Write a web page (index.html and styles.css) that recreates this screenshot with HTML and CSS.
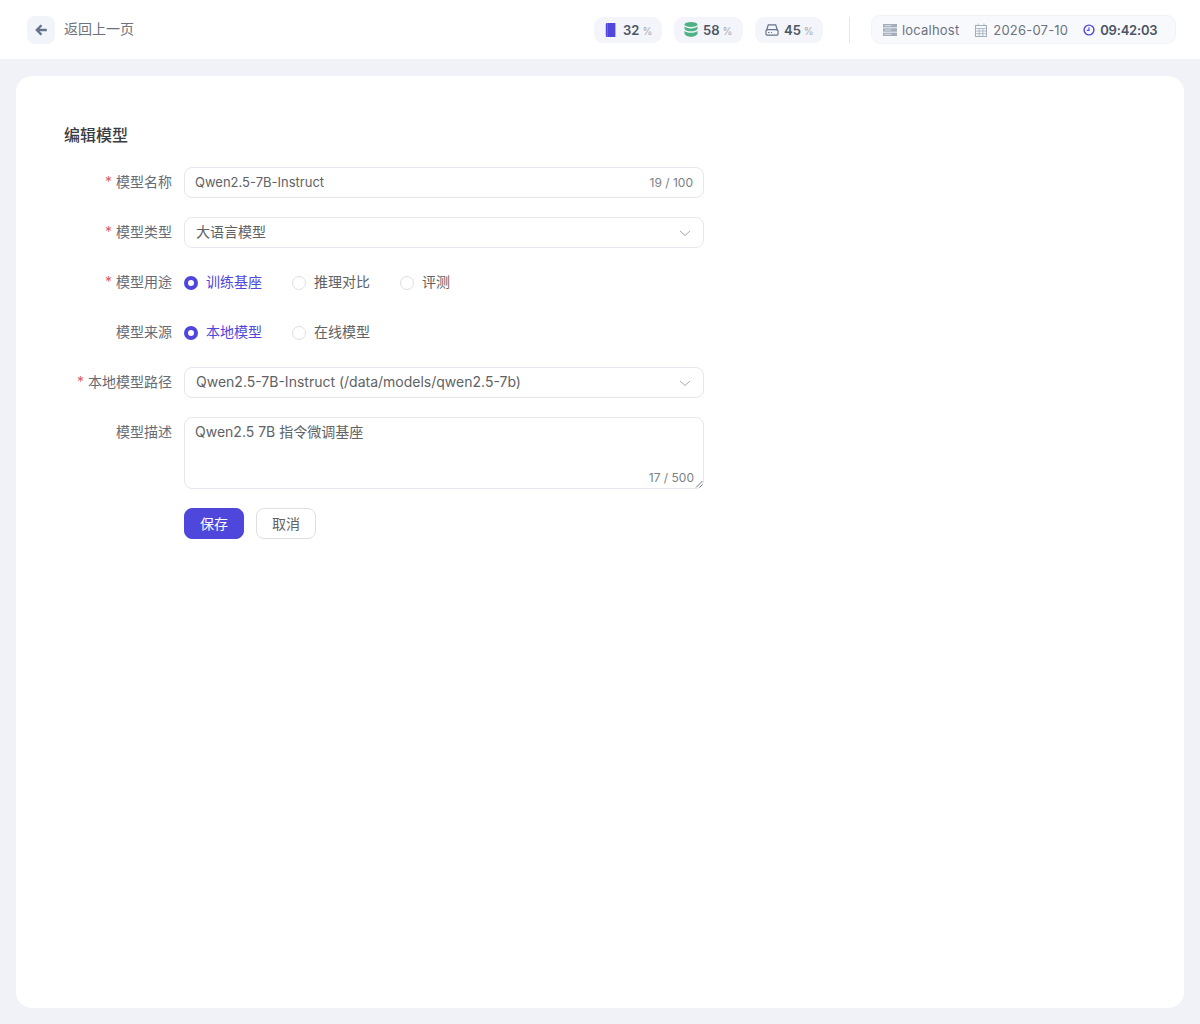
FILE: index.html
```html
<!DOCTYPE html>
<html lang="zh-CN">
<head>
<meta charset="utf-8">
<title>编辑模型</title>
<link rel="stylesheet" href="styles.css">
</head>
<body>
<header class="topbar">
  <div class="back">
    <span class="back-btn"><svg width="12" height="12" viewBox="0 0 12 12"><path d="M5.600.4.200 6l5.400 5.600 1.700-1.700L4.600 7.200h7.200V4.800H4.600l2.700-2.700z" fill="#64748b"/></svg></span>
    <span class="back-text">返回上一页</span>
  </div>
  <div class="status">
    <div class="stat">
      <svg width="14" height="14" viewBox="0 0 14 14"><path d="M3 0h8.400v14H3a1.200 1.200 0 0 1-1.200-1.200V1.200A1.200 1.200 0 0 1 3 0z" fill="#4f47dc"/><path d="M3.500 0v14" stroke="#7a73ee" stroke-width=".7"/></svg>
      <span class="num">32</span><span class="pct">%</span>
    </div>
    <div class="stat">
      <svg width="14" height="15" viewBox="0 0 14 15" fill="#4fb286"><ellipse cx="7" cy="2.600" rx="6.500" ry="2.500"/><path d="M.5 4.300C1.500 5.700 4 6.400 7 6.400s5.500-.7 6.500-2.100v2.600C12.800 8.500 10 9.300 7 9.300S1.200 8.500.5 6.900z"/><path d="M.5 8.700c1 1.400 3.500 2.100 6.500 2.100s5.500-.7 6.500-2.100v3.400c-.7 1.600-3.500 2.800-6.500 2.800s-5.800-1.200-6.500-2.800z"/></svg>
      <span class="num">58</span><span class="pct">%</span>
    </div>
    <div class="stat">
      <svg width="14" height="12" viewBox="0 0 14 12" fill="none" stroke="#64748b" stroke-width="1.200"><path d="M1.500 6.500 3.300.9h7.400l1.800 5.600"/><rect x="1" y="5.700" width="12" height="5.500" rx="1.300"/><path d="M3 8.500h1.500M6 8.500h1"/></svg>
      <span class="num">45</span><span class="pct">%</span>
    </div>
  </div>
  <div class="divider"></div>
  <div class="sysinfo">
    <span class="info">
      <svg width="14" height="12" viewBox="0 0 14 12" fill="#a3adbc"><rect x="0" y="0" width="14" height="3.400"/><rect x="0" y="4.300" width="14" height="3.400"/><rect x="0" y="8.600" width="14" height="3.400"/><path d="M1.500 1.700h7M1.500 6h7M1.500 10.300h7" stroke="#e8ebf0" stroke-width=".8"/></svg>
      <span>localhost</span>
    </span>
    <span class="info">
      <svg width="12" height="14" viewBox="0 0 12 14" fill="none" stroke="#a3adbc"><rect x=".5" y="2.500" width="11" height="11"/><path d="M.5 5.500h11M3 .5v2.500M9 .5v2.500M4.200 5.500v8M7.800 5.500v8M.5 8h11M.5 10.700h11" stroke-width=".8"/></svg>
      <span>2026-07-10</span>
    </span>
    <span class="info time">
      <svg width="12" height="12" viewBox="0 0 12 12" fill="none" stroke="#4f47dc" stroke-width="1.400"><circle cx="6" cy="6" r="4.900"/><path d="M6 3.200V6.400H3.800" stroke-width="1.100"/></svg>
      <span>09:42:03</span>
    </span>
  </div>
</header>

<main class="card">
  <h1 class="title">编辑模型</h1>
  <form class="form">
    <div class="row">
      <div class="label"><i>*</i>模型名称</div>
      <div class="field input"><span class="value small">Qwen2.5-7B-Instruct</span><span class="count">19 / 100</span></div>
    </div>
    <div class="row">
      <div class="label"><i>*</i>模型类型</div>
      <div class="field select"><span class="value">大语言模型</span>
        <svg class="chev" width="12" height="12" viewBox="0 0 12 12" fill="none" stroke="#a3a9b3"><path d="M1 4l5 4.500L11 4"/></svg>
      </div>
    </div>
    <div class="row">
      <div class="label"><i>*</i>模型用途</div>
      <div class="radios">
        <span class="radio on"><b></b><span>训练基座</span></span>
        <span class="radio"><b></b><span>推理对比</span></span>
        <span class="radio"><b></b><span>评测</span></span>
      </div>
    </div>
    <div class="row">
      <div class="label">模型来源</div>
      <div class="radios">
        <span class="radio on"><b></b><span>本地模型</span></span>
        <span class="radio"><b></b><span>在线模型</span></span>
      </div>
    </div>
    <div class="row">
      <div class="label"><i>*</i>本地模型路径</div>
      <div class="field select"><span class="value">Qwen2.5-7B-Instruct (/data/models/qwen2.5-7b)</span>
        <svg class="chev" width="12" height="12" viewBox="0 0 12 12" fill="none" stroke="#a3a9b3"><path d="M1 4l5 4.500L11 4"/></svg>
      </div>
    </div>
    <div class="row">
      <div class="label">模型描述</div>
      <div class="field area"><span class="value">Qwen2.5 7B 指令微调基座</span><span class="count">17 / 500</span>
        <svg class="grip" width="8" height="8" viewBox="0 0 8 8" fill="none" stroke="#6b7280"><path d="M1 7.500 7.500 1M4.500 7.500 7.500 4.500"/></svg>
      </div>
    </div>
    <div class="actions">
      <span class="btn primary">保存</span>
      <span class="btn">取消</span>
    </div>
  </form>
</main>
</body>
</html>
```
FILE: styles.css
```css
* { box-sizing: border-box; }
html, body { height: 100%; }
body {
  margin: 0;
  background: #f0f2f7;
  font-family: Inter, "Noto Sans CJK SC", sans-serif;
  color: #4b5563;
  font-size: 14px;
  display: flex;
  flex-direction: column;
  height: 1024px;
  overflow: hidden;
}
svg { flex: none; }
.topbar {
  height: 59px;
  flex: none;
  background: #fff;
  display: flex;
  align-items: center;
  padding: 0 24px 0 27px;
}
.back { display: flex; align-items: center; gap: 9px; margin-right: auto; }
.back-btn {
  width: 28px; height: 28px;
  border-radius: 8px;
  background: #f1f4f9;
  display: flex; align-items: center; justify-content: center;
}
.back-text { color: #6b7280; font-size: 14px; line-height: 20px; padding-bottom: 1px; }
.status { display: flex; gap: 12px; }
.stat {
  height: 26px;
  padding: 0 0 0 10px;
  background: #f3f5fa;
  border-radius: 9px;
  display: flex; align-items: center;
  gap: 5px;
  width: 68px;
}
.stat:nth-child(2) { width: 69px; }
.num { font-size: 13px; font-weight: 600; color: #4b5563; }
.pct { font-size: 10px; color: #a3a9b3; margin-left: -2px; padding-top: 2px; }
.divider { width: 1px; height: 26px; background: #e5e7eb; margin: 0 20px 0 26px; }
.sysinfo {
  width: 305px;
  margin-left: 1px;
  height: 29px;
  background: #f8f9fc;
  border: 1px solid #f1f3f7;
  border-radius: 9px;
  display: flex; align-items: center;
  padding: 0 11px;
  gap: 16px;
  white-space: nowrap;
}
.info { display: flex; align-items: center; gap: 5px; color: #6b7280; font-size: 13px; letter-spacing: .2px; }
.info:nth-child(2) { gap: 6px; }
.time { color: #4b5563; font-weight: 600; gap: 5px; letter-spacing: -.2px; margin-left: -1px; }
.card {
  flex: 1;
  margin: 17px 16px 16px;
  background: #fff;
  border-radius: 16px;
  padding: 48px;
}
.title {
  margin: 0 0 20px;
  font-size: 16px;
  line-height: 23px;
  font-weight: 500;
  color: #3a3d42;
}
.form { width: 640px; display: flex; flex-direction: column; gap: 19px; }
.row { display: flex; gap: 12px; min-height: 31px; }
.label {
  width: 108px;
  flex: none;
  text-align: right;
  line-height: 30px;
  color: #666b75;
  font-size: 14px;
}
.label i { font-style: normal; color: #e0605f; margin-right: 4px; }
.field {
  flex: 1;
  height: 31px;
  border: 1px solid #e4e7ed;
  border-radius: 8px;
  background: #fff;
  position: relative;
  display: flex;
  align-items: center;
  justify-content: space-between;
  padding: 0 10px;
  color: #606266;
  font-size: 14px;
}
.value { line-height: 20px; padding-bottom: 1px; }
.small { font-size: 13px; }
.select { padding: 0 11px; }
.count { font-size: 12px; color: #7b8088; }
.chev { margin-right: 1px; }
.area { height: 72px; align-items: flex-start; line-height: 28px; padding-top: 4px; }
.area .count { position: absolute; right: 9px; bottom: 1px; line-height: 18px; }
.grip { position: absolute; right: 0; bottom: 0; }
.radios { display: flex; gap: 30px; align-items: center; }
.radio { display: flex; align-items: center; gap: 8px; color: #606266; font-size: 14px; }
.radio span { line-height: 20px; padding-bottom: 2px; }
.radio b {
  width: 14px; height: 14px;
  border-radius: 50%;
  border: 1px solid #dcdfe6;
  background: #fff;
}
.radio.on { color: #4f47dc; }
.radio.on b { border: 4.500px solid #4f47dc; }
.actions { display: flex; gap: 12px; padding-left: 120px; }
.btn {
  width: 60px; height: 31px;
  border: 1px solid #dcdfe6;
  border-radius: 8px;
  display: flex; align-items: center; justify-content: center;
  color: #606266;
  font-size: 14px;
  padding-bottom: 2px;
}
.btn.primary { background: #4f47dc; border-color: #4f47dc; color: #fff; }
```
